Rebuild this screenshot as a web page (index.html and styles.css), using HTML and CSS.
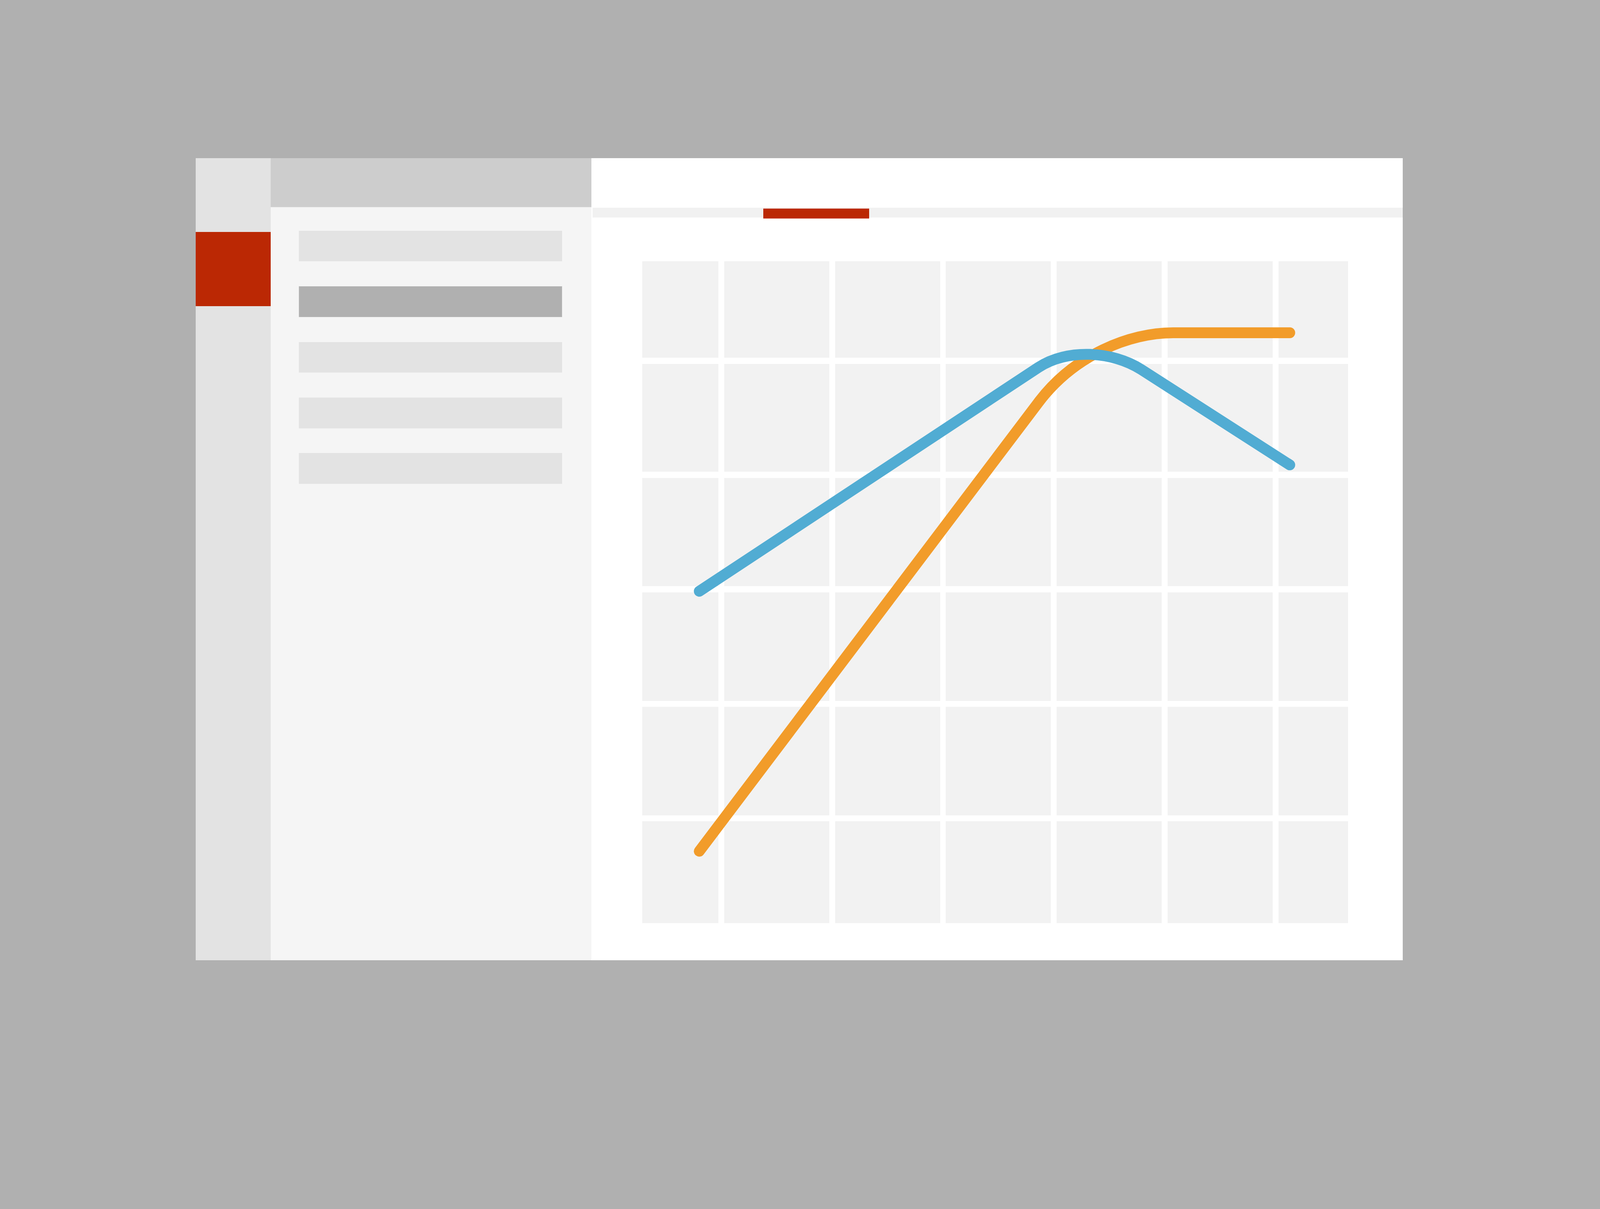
FILE: index.html
```html
<!DOCTYPE html>
<html lang="en">
<head>
<meta charset="utf-8">
<meta name="viewport" content="width=device-width, initial-scale=1">
<title>Chart view</title>
<link rel="stylesheet" href="styles.css">
</head>
<body>
<div class="frame">
  <div class="rail"><div class="rail-active"></div></div>
  <div class="panel">
    <div class="panel-head"></div>
    <div class="panel-list">
      <div class="item"></div>
      <div class="item selected"></div>
      <div class="item"></div>
      <div class="item"></div>
      <div class="item"></div>
    </div>
  </div>
  <div class="main">
    <div class="main-top"></div>
    <div class="tabstrip"><div class="tab-indicator"></div></div>
    <div class="chart">
      <div class="grid">
        <div class="cell"></div><div class="cell"></div><div class="cell"></div><div class="cell"></div><div class="cell"></div><div class="cell"></div><div class="cell"></div>
        <div class="cell"></div><div class="cell"></div><div class="cell"></div><div class="cell"></div><div class="cell"></div><div class="cell"></div><div class="cell"></div>
        <div class="cell"></div><div class="cell"></div><div class="cell"></div><div class="cell"></div><div class="cell"></div><div class="cell"></div><div class="cell"></div>
        <div class="cell"></div><div class="cell"></div><div class="cell"></div><div class="cell"></div><div class="cell"></div><div class="cell"></div><div class="cell"></div>
        <div class="cell"></div><div class="cell"></div><div class="cell"></div><div class="cell"></div><div class="cell"></div><div class="cell"></div><div class="cell"></div>
        <div class="cell"></div><div class="cell"></div><div class="cell"></div><div class="cell"></div><div class="cell"></div><div class="cell"></div><div class="cell"></div>
      </div>
      <svg class="lines" viewBox="1778 724 1955 1833" preserveAspectRatio="none" xmlns="http://www.w3.org/2000/svg">
        <path class="line-orange" d="M1936 2358 L2875 1115 C2975 982.6 3128 922 3248 922 L3571 922"/>
        <path class="line-blue" d="M1936 1638 L2875 1018 C2955 965.2 3080 972.6 3160 1024 L3571 1288"/>
      </svg>
    </div>
  </div>
</div>
</body>
</html>
```

FILE: styles.css
```css
/* one design unit = one pixel of the 4430px-wide design */
:root {
  --u: calc(100vw / 4430);
}

html, body {
  margin: 0;
  overflow: hidden;
}

body {
  background: #b0b0b0;
  width: calc(4430 * var(--u));
  height: calc(3096 * var(--u));
  padding: calc(438 * var(--u)) 0 0 calc(542 * var(--u));
  box-sizing: border-box;
  font-family: "Liberation Sans", Arial, sans-serif;
}

.frame {
  display: flex;
  width: calc(3342 * var(--u));
  height: calc(2222 * var(--u));
}

.rail {
  width: calc(207 * var(--u));
  flex: none;
  background: #e3e3e3;
  padding-top: calc(204 * var(--u));
  box-sizing: border-box;
}

.rail-active {
  height: calc(206 * var(--u));
  background: #bb2804;
}

.panel {
  width: calc(889 * var(--u));
  flex: none;
  background: #f5f5f5;
  display: flex;
  flex-direction: column;
}

.panel-head {
  height: calc(135 * var(--u));
  background: #cdcdcd;
  border-bottom: calc(2 * var(--u)) solid #e4e4e4;
}

.panel-list {
  display: flex;
  flex-direction: column;
  gap: calc(69 * var(--u));
  padding: calc(65 * var(--u)) calc(82 * var(--u)) 0 calc(78 * var(--u));
}

.item {
  height: calc(85 * var(--u));
  background: #e3e3e3;
}

.item.selected {
  background: #b0b0b0;
  box-shadow: inset 0 0 0 1px #bdbdbd;
}

.main {
  flex: 1;
  background: #ffffff;
  display: flex;
  flex-direction: column;
}

.main-top {
  height: calc(137 * var(--u));
}

.tabstrip {
  height: calc(27 * var(--u));
  margin-left: calc(3 * var(--u));
  background: #f1f1f1;
}

.tab-indicator {
  margin-left: calc(472 * var(--u));
  margin-top: calc(3 * var(--u));
  width: calc(294 * var(--u));
  height: calc(28 * var(--u));
  box-sizing: border-box;
  background: #bb2804;
  border-top: 1px solid #c8442a;
  border-bottom: 1px solid #e08070;
}

.chart {
  position: relative;
  margin: calc(122 * var(--u)) calc(151 * var(--u)) 0 calc(140 * var(--u));
}

.grid {
  display: grid;
  grid-template-columns: calc(211 * var(--u)) repeat(5, calc(291 * var(--u))) calc(193 * var(--u));
  grid-template-rows: calc(267 * var(--u)) calc(299 * var(--u)) calc(300 * var(--u)) calc(300 * var(--u)) calc(300 * var(--u)) calc(282 * var(--u));
  gap: calc(17 * var(--u)) calc(16 * var(--u));
}

.cell {
  background: #f2f2f2;
}

.lines {
  position: absolute;
  left: 0;
  top: 0;
  width: calc(1955 * var(--u));
  height: calc(1833 * var(--u));
  overflow: visible;
}

.line-orange,
.line-blue {
  fill: none;
  stroke-width: 30;
  stroke-linecap: round;
  stroke-linejoin: round;
}

.line-orange {
  stroke: #f29c2a;
}

.line-blue {
  stroke: #51acd3;
}
```
